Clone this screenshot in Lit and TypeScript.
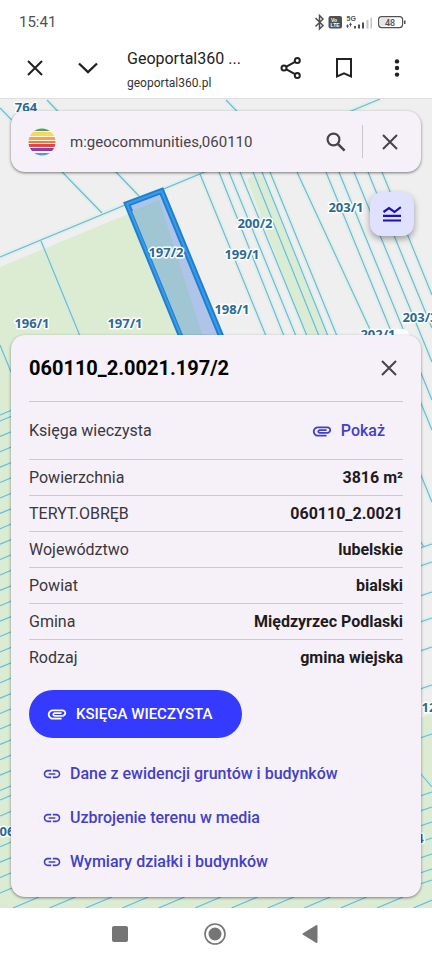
import { LitElement, html, css, svg } from "lit";
import { customElement, state } from "lit/decorators.js";

type Segment = [number, number, number, number];

const range = (from: number, to: number, step: number): number[] => {
  const out: number[] = [];
  for (let v = from; v <= to; v += step) out.push(v);
  return out;
};

/* Parcel borders: main boundary, side plots, and the narrow strips around them. */
const BORDERS: Segment[] = [
  [0, 257, 380, 99],
  [0, 108, 102, 213],
  [47, 100, 139, 196],
  [226, 100, 270, 145],
  [41, 241, 80, 336],
  [0, 345, 11, 372],
  [200, 174, 266, 336],
  [219, 172, 284, 336],
  [229, 172, 296, 336],
  [240, 172, 307, 336],
  [253, 172, 319, 336],
  [262, 172, 328, 336],
  [270, 172, 337, 336],
  [297, 172, 373, 336],
  [326, 172, 393, 336],
  [339, 172, 432, 400],
  [354, 172, 432, 362],
  [368, 172, 432, 328],
  [382, 172, 432, 295],
  [420, 401, 432, 430],
  [420, 473, 432, 502],
  [420, 541, 424, 547],
];

const LEFT_STRIPS: Segment[] = [415, ...range(421, 800, 15.4), 800, ...range(816, 900, 15.4)].map(
  (y): Segment => [0, y, 12, y - 5],
);

const RIGHT_STRIPS: Segment[] = [548, 566, 596, 622, 651, 689, 738, 796, 811, 826, 842, 858, 873, 884].map(
  (y): Segment => [420, y, 432, y - 4],
);

const BOTTOM_STRIPS: Segment[] = range(13, 420, 36.4).map((x): Segment => [x, 908, x + 26, 897]);

const LINES = [...BORDERS, ...LEFT_STRIPS, ...RIGHT_STRIPS, ...BOTTOM_STRIPS, [420, 773, 432, 787] as Segment];

const PARCEL_LABELS: { x: number; y: number; text: string }[] = [
  { x: 26, y: 112, text: "764" },
  { x: 166, y: 257, text: "197/2" },
  { x: 32, y: 328, text: "196/1" },
  { x: 125, y: 328, text: "197/1" },
  { x: 232, y: 314, text: "198/1" },
  { x: 242, y: 259, text: "199/1" },
  { x: 255, y: 228, text: "200/2" },
  { x: 346, y: 212, text: "203/1" },
  { x: 420, y: 322, text: "203/3" },
  { x: 378, y: 339, text: "202/1" },
  { x: 429, y: 712, text: "12" },
  { x: 7, y: 836, text: "06" },
  { x: 420, y: 843, text: "4" },
];

const closeIcon = (size: number, stroke: number) => html`
  <svg width=${size} height=${size} viewBox="0 0 16 16" aria-hidden="true">
    <path d="M1 1L15 15M15 1L1 15" fill="none" stroke="currentColor" stroke-width=${stroke} />
  </svg>
`;

const clipIcon = html`
  <svg width="22" height="22" viewBox="0 0 24 24" fill="currentColor" aria-hidden="true">
    <path
      d="M2 12.5C2 9.46 4.46 7 7.5 7H18c2.21 0 4 1.79 4 4s-1.79 4-4 4H9.5C8.12 15 7 13.88 7 12.5S8.12 10 9.5 10H17v2H9.41c-.55 0-.55 1 0 1H18c1.1 0 2-.9 2-2s-.9-2-2-2H7.5C5.57 9 4 10.57 4 12.5S5.57 16 7.5 16H17v2H7.5C4.46 18 2 15.54 2 12.5z"
    />
  </svg>
`;

const linkIcon = html`
  <svg width="20" height="20" viewBox="0 0 24 24" fill="currentColor" aria-hidden="true">
    <path
      d="M3.9 12c0-1.71 1.39-3.1 3.1-3.1h4V7H7c-2.76 0-5 2.24-5 5s2.24 5 5 5h4v-1.9H7c-1.71 0-3.1-1.39-3.1-3.1zM8 13h8v-2H8v2zm9-6h-4v1.9h4c1.71 0 3.1 1.39 3.1 3.1s-1.39 3.1-3.1 3.1h-4V17h4c2.76 0 5-2.24 5-5s-2.24-5-5-5z"
    />
  </svg>
`;

@customElement("status-bar")
export class StatusBar extends LitElement {
  static styles = css`
    :host {
      display: flex;
      align-items: center;
      justify-content: space-between;
      height: 44px;
      padding: 0 26px 0 19px;
      box-sizing: border-box;
      color: #505050;
    }
    .time {
      font-size: 15px;
      line-height: 20px;
    }
    .tiny {
      font: 700 7px "Liberation Sans", sans-serif;
    }
    .lte {
      font: 700 5px "Liberation Sans", sans-serif;
      fill: #fff;
    }
    .charge {
      font: 500 9px Roboto, sans-serif;
    }
  `;

  render() {
    return html`
      <span class="time">15:41</span>
      <svg width="92" height="20" viewBox="0 0 92 20" fill="currentColor" role="img" aria-label="Bluetooth, VoLTE, 5G, 48%">
        <path d="M1.500 6L9 13.500L5.500 17V3.500L9 7L1.500 14.500" fill="none" stroke="currentColor" stroke-width="1.500" />
        <rect x="14.500" y="4" width="13.500" height="12.500" rx="2" />
        <text class="lte" x="17" y="9.500">Vo</text>
        <text class="lte" x="16.500" y="15">LTE</text>
        <text class="tiny" x="32.500" y="8.500">5G</text>
        <path d="M33.500 15.500V12.500M36.500 11.500V14.500" stroke="currentColor" stroke-width="1" />
        <path d="M32 13.500L33.500 16L35 13.500ZM35 13L36.500 10.500L38 13Z" />
        <path d="M40 14h2v2.500h-2zM44 12.500h2v4h-2zM48 10.500h2v6h-2z" />
        <path d="M52.500 8h2v8.500h-2zM56.500 5.500h1.500v11h-1.500z" opacity="0.35" />
        <rect x="64.600" y="4.600" width="24" height="11" rx="3" fill="none" stroke="currentColor" stroke-width="1.200" />
        <rect x="66" y="6" width="11" height="8.200" rx="2" opacity="0.15" />
        <path d="M90 8.500h1.500v3.500h-1.500z" />
        <text class="charge" x="71" y="13.500">48</text>
      </svg>
    `;
  }
}

@customElement("browser-bar")
export class BrowserBar extends LitElement {
  static styles = css`
    :host {
      display: flex;
      align-items: flex-start;
      height: 55px;
      padding: 0 9px 0 8px;
      box-sizing: border-box;
      color: #222;
      border-bottom: 1px solid #dedede;
    }
    button {
      flex: none;
      display: grid;
      place-items: center;
      width: 53px;
      height: 48px;
      padding: 0;
      border: 0;
      background: none;
      color: inherit;
    }
    .page {
      flex: 1;
      min-width: 0;
      padding: 3px 0 0 13px;
      white-space: nowrap;
    }
    .title {
      font-size: 16px;
      line-height: 24px;
    }
    .host {
      font-size: 12px;
      line-height: 24px;
      color: #333;
    }
  `;

  render() {
    return html`
      <button aria-label="Zamknij kartę">${closeIcon(16, 2)}</button>
      <button aria-label="Zwiń">
        <svg width="20" height="12" viewBox="0 0 20 12" aria-hidden="true">
          <path d="M1 1.500L10 10L19 1.500" fill="none" stroke="currentColor" stroke-width="2.400" />
        </svg>
      </button>
      <div class="page">
        <div class="title">Geoportal360 ...</div>
        <div class="host">geoportal360.pl</div>
      </div>
      <button aria-label="Udostępnij">
        <svg width="22" height="22" viewBox="0 0 22 22" fill="none" stroke="currentColor" stroke-width="2" aria-hidden="true">
          <path d="M6 9.800L15 4.800M6 12.200L15 17.200" />
          <circle cx="4" cy="11" r="2.500" />
          <circle cx="17.300" cy="3.500" r="2.500" />
          <circle cx="17.300" cy="18.500" r="2.500" />
        </svg>
      </button>
      <button aria-label="Zakładka">
        <svg width="16" height="20" viewBox="0 0 16 20" aria-hidden="true">
          <path d="M1 1H15V18.400L8 15.300L1 18.400Z" fill="none" stroke="currentColor" stroke-width="2" />
        </svg>
      </button>
      <button aria-label="Więcej">
        <svg width="6" height="18" viewBox="0 0 6 18" fill="currentColor" aria-hidden="true">
          <circle cx="3" cy="2.400" r="2.200" />
          <circle cx="3" cy="9" r="2.200" />
          <circle cx="3" cy="15.600" r="2.200" />
        </svg>
      </button>
    `;
  }
}

@customElement("parcel-map")
export class ParcelMap extends LitElement {
  static styles = css`
    :host {
      display: block;
    }
    .canvas {
      display: block;
      width: 100%;
      height: 100%;
    }
    .field {
      fill: #dcecd3;
    }
    .halo {
      fill: none;
      stroke: #c4f0ee;
      stroke-width: 5;
      opacity: 0.4;
    }
    .border {
      fill: none;
      stroke: #72b6c6;
      stroke-width: 1.1;
    }
    .shade {
      fill: #9fc6d2;
    }
    .parcel {
      fill: #b0c4ea;
      stroke: #1f80d2;
      stroke-width: 6;
    }
    .parcel-core {
      fill: none;
      stroke: #3a9be6;
      stroke-width: 2;
    }
    .label {
      font: 700 13px "Noto Sans", sans-serif;
      text-anchor: middle;
      fill: #2a6a94;
      stroke: #fff;
      stroke-width: 3px;
      stroke-linejoin: round;
      paint-order: stroke;
    }
  `;

  render() {
    const path = LINES.map(([x1, y1, x2, y2]) => `M${x1} ${y1}L${x2} ${y2}`).join("");
    const parcel = "M127 204L161.500 191L221 336L270 455H236L181 336Z";
    return html`
      <svg class="canvas" viewBox="0 99 432 809" preserveAspectRatio="xMidYMin slice" role="img" aria-label="Mapa działek">
        <rect y="99" width="432" height="809" fill="#efefef" />
        <path class="field" d="M0 267L128 214L184 345V400H432V908H0Z" />
        <path fill="#efefef" d="M184 336H432V713L420 718L300 500Z" />
        <path class="field" d="M247 179Q255 173 263 177L328 336H306Z" />
        <path class="halo" d=${path} />
        <path class="border" d=${path} />
        <path class="parcel" d=${parcel} />
        <path class="shade" d="M132 211L159 200L204 340H185Z" />
        <path class="parcel-core" d=${parcel} />
        <rect x="379" y="329" width="30" height="12" rx="6" fill="#fff" />
        ${PARCEL_LABELS.map((l) => svg`<text class="label" x=${l.x} y=${l.y}>${l.text}</text>`)}
      </svg>
    `;
  }
}

@customElement("search-card")
export class SearchCard extends LitElement {
  static styles = css`
    :host {
      display: flex;
      align-items: center;
      height: 61px;
      padding: 0 5px 0 17px;
      box-sizing: border-box;
      border-radius: 14px;
      background: #f6f1f8;
      box-shadow: 0 1px 3px rgba(0, 0, 0, 0.5);
      color: #46434a;
    }
    .logo {
      flex: none;
    }
    .query {
      flex: 1;
      min-width: 0;
      height: 40px;
      margin-left: 14px;
      padding: 0;
      border: 0;
      outline: 0;
      background: none;
      font: 400 15px Roboto, sans-serif;
      color: #46434a;
    }
    button {
      flex: none;
      display: grid;
      place-items: center;
      width: 53px;
      height: 48px;
      padding: 0;
      border: 0;
      background: none;
      color: inherit;
    }
    .rule {
      width: 1px;
      height: 33px;
      background: #c9c5cc;
    }
  `;

  @state() private query = "m:geocommunities,060110";

  private onInput(e: Event) {
    this.query = (e.target as HTMLInputElement).value;
  }

  render() {
    return html`
      <svg class="logo" width="28" height="28" viewBox="0 0 28 28" aria-hidden="true">
        <clipPath id="disc"><circle cx="14" cy="14" r="13.500" /></clipPath>
        <g clip-path="url(#disc)">
          <rect width="28" height="28" fill="#fdf6f0" />
          <rect y="0" width="28" height="3" fill="#4aa564" />
          <rect y="4" width="28" height="4" fill="#fbd65a" />
          <rect y="9" width="28" height="3" fill="#f3a545" />
          <rect y="13" width="28" height="2" fill="#ee7a3c" />
          <rect y="16" width="28" height="3" fill="#e2444a" />
          <rect y="20" width="28" height="3" fill="#8a3fa8" />
          <rect y="25" width="28" height="3" fill="#4f9be0" />
        </g>
      </svg>
      <input class="query" type="text" aria-label="Szukaj" .value=${this.query} @input=${this.onInput} />
      <button aria-label="Szukaj">
        <svg width="20" height="20" viewBox="0 0 20 20" fill="none" stroke="currentColor" stroke-width="2.200" aria-hidden="true">
          <circle cx="7.500" cy="7.500" r="5.900" />
          <path d="M11.800 11.800L18.600 18.600" stroke-width="2.600" />
        </svg>
      </button>
      <span class="rule"></span>
      <button aria-label="Wyczyść">${closeIcon(16, 2)}</button>
    `;
  }
}

@customElement("parcel-card")
export class ParcelCard extends LitElement {
  static styles = css`
    :host {
      display: block;
      padding: 0 18px 13px;
      border-radius: 14px;
      background: #f6f1f8;
      box-shadow: 0 1px 3px rgba(0, 0, 0, 0.45);
      color: #1e1b22;
    }
    .head {
      display: flex;
      align-items: center;
      justify-content: space-between;
      height: 66px;
    }
    h1 {
      margin: 0;
      font-size: 20px;
      line-height: 28px;
      font-weight: 700;
      color: #000;
    }
    .close {
      display: grid;
      place-items: center;
      width: 28px;
      height: 40px;
      padding: 0;
      border: 0;
      background: none;
      color: #46434a;
    }
    .facts {
      width: 100%;
      border-collapse: collapse;
      font-size: 16px;
      line-height: 20px;
    }
    .facts th,
    .facts td {
      height: 35px;
      padding: 0;
      border-top: 1px solid #cdc9d0;
      vertical-align: middle;
    }
    .facts th {
      text-align: left;
      font-weight: 400;
      color: #3a373e;
    }
    .facts td {
      text-align: right;
      font-weight: 700;
    }
    .facts .tall th,
    .facts .tall td {
      height: 57px;
    }
    a {
      color: #4340c8;
      text-decoration: none;
      font-weight: 500;
      font-size: 16px;
      line-height: 20px;
    }
    .show {
      display: inline-flex;
      align-items: center;
      gap: 8px;
      padding-right: 18px;
      vertical-align: middle;
    }
    .primary {
      display: inline-flex;
      align-items: center;
      gap: 8px;
      height: 48px;
      margin-top: 15px;
      padding: 0 30px 0 17px;
      border: 0;
      border-radius: 24px;
      background: #343bff;
      color: #fff;
      font: 500 15px Roboto, sans-serif;
      white-space: nowrap;
    }
    .links {
      margin: 14px 0 0;
      padding: 0 0 0 13px;
      list-style: none;
    }
    .links a {
      display: flex;
      align-items: center;
      gap: 8px;
      height: 44px;
    }
  `;

  private facts: [string, string][] = [
    ["Powierzchnia", "3816 m²"],
    ["TERYT.OBRĘB", "060110_2.0021"],
    ["Województwo", "lubelskie"],
    ["Powiat", "bialski"],
    ["Gmina", "Międzyrzec Podlaski"],
    ["Rodzaj", "gmina wiejska"],
  ];

  private links = ["Dane z ewidencji gruntów i budynków", "Uzbrojenie terenu w media", "Wymiary działki i budynków"];

  render() {
    return html`
      <div class="head">
        <h1>060110_2.0021.197/2</h1>
        <button class="close" aria-label="Zamknij">${closeIcon(16, 2)}</button>
      </div>
      <table class="facts">
        <tbody>
          <tr class="tall">
            <th scope="row">Księga wieczysta</th>
            <td><a class="show" href="#ksiega">${clipIcon}Pokaż</a></td>
          </tr>
          ${this.facts.map(
            ([name, value]) => html`
              <tr>
                <th scope="row">${name}</th>
                <td>${value}</td>
              </tr>
            `,
          )}
        </tbody>
      </table>
      <button class="primary">${clipIcon}KSIĘGA WIECZYSTA</button>
      <ul class="links">
        ${this.links.map((text, i) => html`<li><a href="#link-${i + 1}">${linkIcon}${text}</a></li>`)}
      </ul>
    `;
  }
}

@customElement("nav-bar")
export class NavBar extends LitElement {
  static styles = css`
    :host {
      display: flex;
      justify-content: center;
      height: 52px;
      padding-right: 3px;
      box-sizing: border-box;
      color: #757575;
    }
    button {
      display: grid;
      place-items: center;
      width: 95px;
      padding: 0;
      border: 0;
      background: none;
      color: inherit;
    }
  `;

  render() {
    return html`
      <button aria-label="Ostatnie">
        <svg width="16" height="16" viewBox="0 0 16 16" aria-hidden="true">
          <rect width="16" height="16" rx="2" fill="currentColor" />
        </svg>
      </button>
      <button aria-label="Ekran główny">
        <svg width="22" height="22" viewBox="0 0 22 22" aria-hidden="true">
          <circle cx="11" cy="11" r="10" fill="none" stroke="currentColor" stroke-width="1.600" />
          <circle cx="11" cy="11" r="6.500" fill="currentColor" />
        </svg>
      </button>
      <button aria-label="Wstecz">
        <svg width="16" height="20" viewBox="0 0 16 20" aria-hidden="true">
          <path d="M1.500 10L14.500 2V18Z" fill="currentColor" stroke="currentColor" stroke-width="2" stroke-linejoin="round" />
        </svg>
      </button>
    `;
  }
}

@customElement("app-root")
export class AppRoot extends LitElement {
  static styles = css`
    :host {
      display: flex;
      flex-direction: column;
      min-height: 100vh;
      background: #fff;
      font-family: Roboto, "Noto Sans", sans-serif;
    }
    .stage {
      position: relative;
      flex: 1;
      display: flex;
      flex-direction: column;
      padding: 12px 11px 11px;
      overflow: hidden;
    }
    .backdrop {
      position: absolute;
      inset: 0;
    }
    .search,
    .layers,
    .details {
      position: relative;
    }
    .layers {
      align-self: flex-end;
      display: grid;
      place-items: center;
      width: 44px;
      height: 44px;
      margin: 20px 7px 40px 0;
      padding: 0;
      border: 0;
      border-radius: 12px;
      background: #e0e0ff;
      color: #1a12b8;
      box-shadow: 0 3px 6px rgba(0, 0, 0, 0.35);
    }
    .details {
      margin-top: auto;
    }
  `;

  render() {
    return html`
      <status-bar></status-bar>
      <browser-bar></browser-bar>
      <main class="stage">
        <parcel-map class="backdrop"></parcel-map>
        <search-card class="search"></search-card>
        <button class="layers" aria-label="Warstwy mapy">
          <svg width="20" height="16" viewBox="0 0 20 16" fill="none" stroke="currentColor" stroke-width="2.200" aria-hidden="true">
            <path d="M1.500 6L7 2.200L12.500 6L18.800 1.200M1 9.800H19M1 14.500H19" />
          </svg>
        </button>
        <parcel-card class="details"></parcel-card>
      </main>
      <nav-bar></nav-bar>
    `;
  }
}
